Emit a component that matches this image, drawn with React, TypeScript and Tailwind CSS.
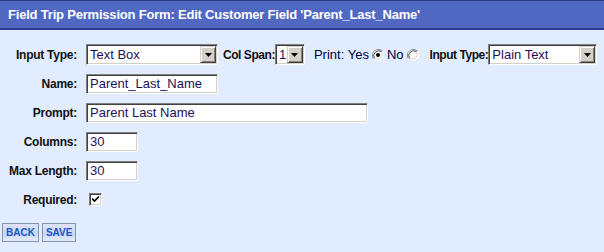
import React from "react";

const inset =
  "bg-white border border-t-[#808080] border-l-[#808080] border-b-white border-r-white shadow-[inset_1px_1px_0_#404040,inset_-1px_-1px_0_#d4d0c8]";

function Arrow() {
  return (
    <div className="w-[16px] h-[17px] shrink-0 bg-[#d4d0c8] border border-t-[#d4d0c8] border-l-[#d4d0c8] border-b-[#404040] border-r-[#404040] shadow-[inset_1px_1px_0_#fff,inset_-1px_-1px_0_#808080] flex items-center justify-center">
      <svg width="7" height="4" viewBox="0 0 7 4">
        <path d="M0 0h7L3.5 4z" fill="#000" />
      </svg>
    </div>
  );
}

function Select({ value, w }: { value: string; w: string }) {
  return (
    <div className={`${inset} ${w} shrink-0 h-[21px] flex items-center justify-between pl-[3px] pr-[1px]`}>
      <span className="text-[13px] text-[#1c0f5a] leading-none">{value}</span>
      <Arrow />
    </div>
  );
}

function Input({ value, w }: { value: string; w: string }) {
  return (
    <div className={`${inset} ${w} h-[20px] flex items-center pl-[3px]`}>
      <span className="text-[13px] text-[#1c0f5a] leading-none">{value}</span>
    </div>
  );
}

function Radio({ checked }: { checked?: boolean }) {
  return (
    <svg width="12" height="12" viewBox="0 0 12 12" className="block">
      <path d="M10.6 2.2A6 6 0 0 0 1.4 9.8" stroke="#808080" strokeWidth="1" fill="none" />
      <circle cx="6" cy="6" r="5" fill="#fff" />
      <path d="M9.5 2.6A5 5 0 0 0 2.5 9.4" stroke="#404040" strokeWidth="1" fill="none" />
      <path d="M1.4 9.8A6 6 0 0 0 10.6 2.2" stroke="#fff" strokeWidth="1" fill="none" />
      <path d="M2.5 9.4A5 5 0 0 0 9.5 2.6" stroke="#d4d0c8" strokeWidth="1" fill="none" />
      {checked && <circle cx="6" cy="6" r="2" fill="#000" />}
    </svg>
  );
}

const labelCls = "text-[12px] font-bold tracking-[-0.25px] text-[#111]";
const inlineLabel = "text-[12px] font-bold tracking-[-0.45px] text-[#111] whitespace-nowrap";

function Row({ label, children }: { label: string; children: React.ReactNode }) {
  return (
    <div className="h-[29px] flex items-center">
      <div className={`w-[77px] shrink-0 text-right ${labelCls}`}>{label}</div>
      <div className="ml-[9px] flex items-center">{children}</div>
    </div>
  );
}

const btn =
  "h-[19px] px-[3px] border border-[#8494b4] bg-[linear-gradient(#dbe5f7_0%,#c9d8f1_55%,#e2ebfa_100%)] text-[10px] font-bold text-[#2152c4] leading-none";

export default function App() {
  return (
    <div
      className="w-[604px] h-[252px] bg-[#e1edff] overflow-hidden"
      style={{ fontFamily: '"Liberation Sans", Arial, sans-serif' }}
    >
      <div className="h-[30px] bg-[#5068c2] border-t border-b-2 border-t-[#2c3c8c] border-b-[#2c3c8c] flex items-center pl-[8px]">
        <span className="text-white font-bold text-[13px] tracking-[-0.2px]">
          Field Trip Permission Form: Edit Customer Field 'Parent_Last_Name'
        </span>
      </div>
      <div className="pt-[10px]">
        <Row label="Input Type:">
          <Select value="Text Box" w="w-[132px]" />
          <span className={`ml-[5px] ${inlineLabel}`}>Col Span:</span>
          <Select value="1" w="w-[30px]" />
          <span className="ml-[9px] text-[13px] text-[#000040] whitespace-nowrap">Print: Yes</span>
          <span className="ml-[3px]"><Radio checked /></span>
          <span className="ml-[3px] text-[13px] text-[#000040]">No</span>
          <span className="ml-[3px]"><Radio /></span>
          <span className={`ml-[11px] ${inlineLabel}`}>Input Type:</span>
          <Select value="Plain Text" w="w-[109px]" />
        </Row>
        <Row label="Name:">
          <Input value="Parent_Last_Name" w="w-[132px]" />
        </Row>
        <Row label="Prompt:">
          <Input value="Parent Last Name" w="w-[282px]" />
        </Row>
        <Row label="Columns:">
          <Input value="30" w="w-[52px]" />
        </Row>
        <Row label="Max Length:">
          <Input value="30" w="w-[52px]" />
        </Row>
        <Row label="Required:">
          <div className={`${inset} w-[13px] h-[13px] ml-[3px] flex items-center justify-center`}>
            <svg width="7" height="7" viewBox="0 0 7 7">
              <path d="M0 2.5L2.5 5L7 0.5" stroke="#000" strokeWidth="1.6" fill="none" />
            </svg>
          </div>
        </Row>
        <div className="mt-[9px] ml-[2px] flex gap-[3px]">
          <button className={btn}>BACK</button>
          <button className={btn}>SAVE</button>
        </div>
      </div>
    </div>
  );
}
